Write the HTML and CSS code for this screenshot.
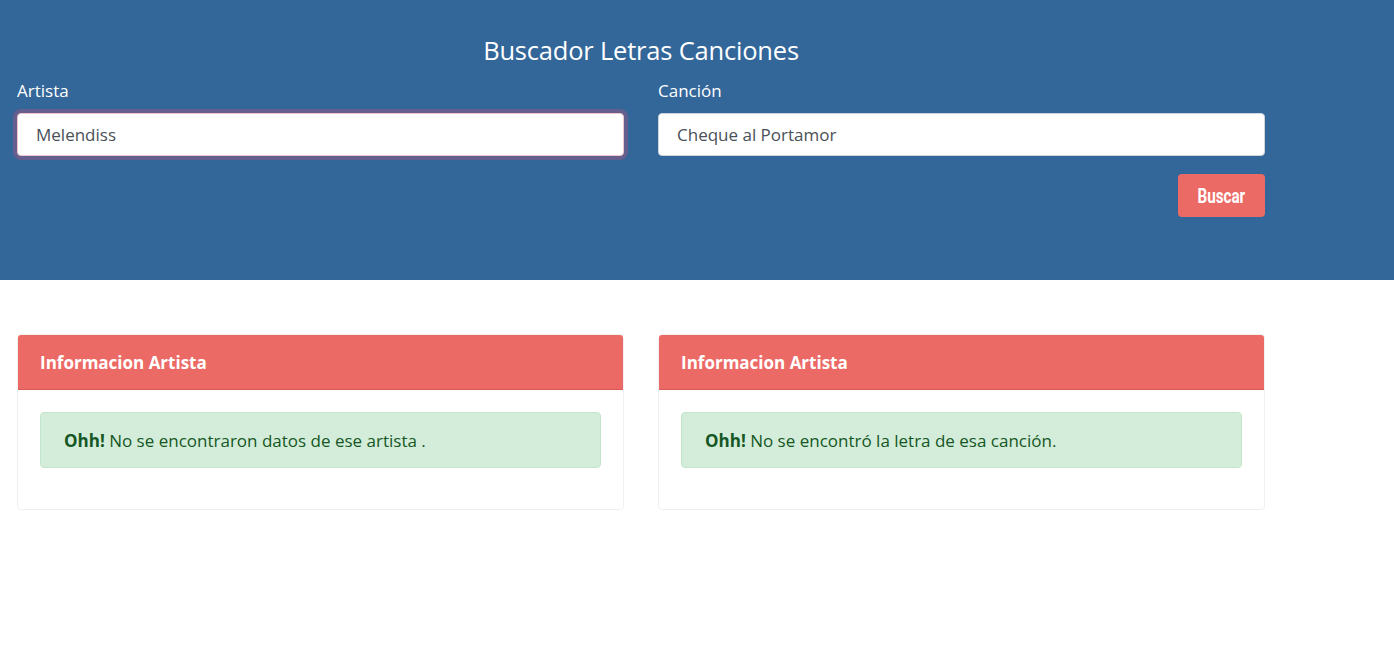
FILE: index.html
```html
<!DOCTYPE html>
<html lang="es">
<head>
<meta charset="utf-8">
<title>Buscador Letras Canciones</title>
<link rel="stylesheet" href="styles.css">
</head>
<body>
<header class="hero">
  <div class="container">
    <h1 class="title">Buscador Letras Canciones</h1>
    <form class="search">
      <div class="fields">
        <div class="field">
          <label class="label" for="artista">Artista</label>
          <input class="input input-focus" id="artista" type="text" value="Melendiss">
        </div>
        <div class="field">
          <label class="label" for="cancion">Canción</label>
          <input class="input" id="cancion" type="text" value="Cheque al Portamor">
        </div>
      </div>
      <div class="actions">
        <button class="btn" type="button"><span class="btn-text">Buscar</span></button>
      </div>
    </form>
  </div>
</header>
<main class="container results">
  <section class="card">
    <div class="card-header">Informacion Artista</div>
    <div class="card-body">
      <div class="alert"><strong>Ohh!</strong> No se encontraron datos de ese artista .</div>
    </div>
  </section>
  <section class="card">
    <div class="card-header">Informacion Artista</div>
    <div class="card-body">
      <div class="alert"><strong>Ohh!</strong> No se encontró la letra de esa canción.</div>
    </div>
  </section>
</main>
</body>
</html>
```
FILE: styles.css
```css
* { box-sizing: border-box; }
html, body { margin: 0; padding: 0; }
body {
  font-family: "Open Sans", "Noto Sans", sans-serif;
  font-size: 17px;
  color: #212529;
  background: #fff;
}
.container {
  width: 1282px;
  padding: 0 17px;
}
.hero {
  background: #336699;
  height: 280px;
  padding-top: 33px;
}
.title {
  margin: 0;
  text-align: center;
  font-weight: 400;
  font-size: 25.5px;
  letter-spacing: -0.2px;
  line-height: 34px;
  color: #fff;
}
.fields {
  display: grid;
  grid-template-columns: 607px 607px;
  column-gap: 34px;
  margin-top: 12px;
}
.field { display: flex; flex-direction: column; }
.label {
  color: #fff;
  font-size: 17px;
  line-height: 24px;
  margin-bottom: 10px;
}
.input {
  height: 43px;
  padding: 0 18px;
  border: 1px solid #ced4da;
  border-radius: 4px;
  font-family: inherit;
  font-size: 17px;
  color: #495057;
  background: #fff;
  outline: none;
}
.input-focus {
  border-color: #f0c6cc;
  box-shadow: 0 0 0 4px #645f8c;
}
.actions {
  display: flex;
  justify-content: flex-end;
  margin-top: 18px;
}
.btn {
  width: 87px;
  height: 43px;
  border: 0;
  border-radius: 4px;
  background: #ec6a66;
  color: #fff;
  display: flex;
  align-items: center;
  justify-content: center;
  padding: 0;
}
.btn-text {
  display: inline-block;
  font-family: "Roboto", "Liberation Sans", sans-serif;
  font-weight: 700;
  font-size: 20px;
  line-height: 1;
  transform: scaleX(0.76);
}
.results {
  display: grid;
  grid-template-columns: 607px 607px;
  column-gap: 34px;
  padding-top: 54px;
}
.card {
  border: 1px solid rgba(0,0,0,.06);
  border-radius: 4px;
  overflow: hidden;
}
.card-header {
  background: #ec6a66;
  border-bottom: 1px solid #d9595a;
  height: 55px;
  padding: 0 22px;
  display: flex;
  align-items: center;
  color: #fff;
  font-weight: 700;
  font-size: 17px;
}
.card-body {
  padding: 22px 22px 41px;
}
.alert {
  background: #d4edda;
  border: 1px solid #c3e6cb;
  border-radius: 4px;
  color: #155724;
  height: 56px;
  display: flex;
  align-items: center;
  padding: 0 23px;
  font-size: 17px;
  white-space: pre;
}
.alert strong { font-weight: 700; }
```
